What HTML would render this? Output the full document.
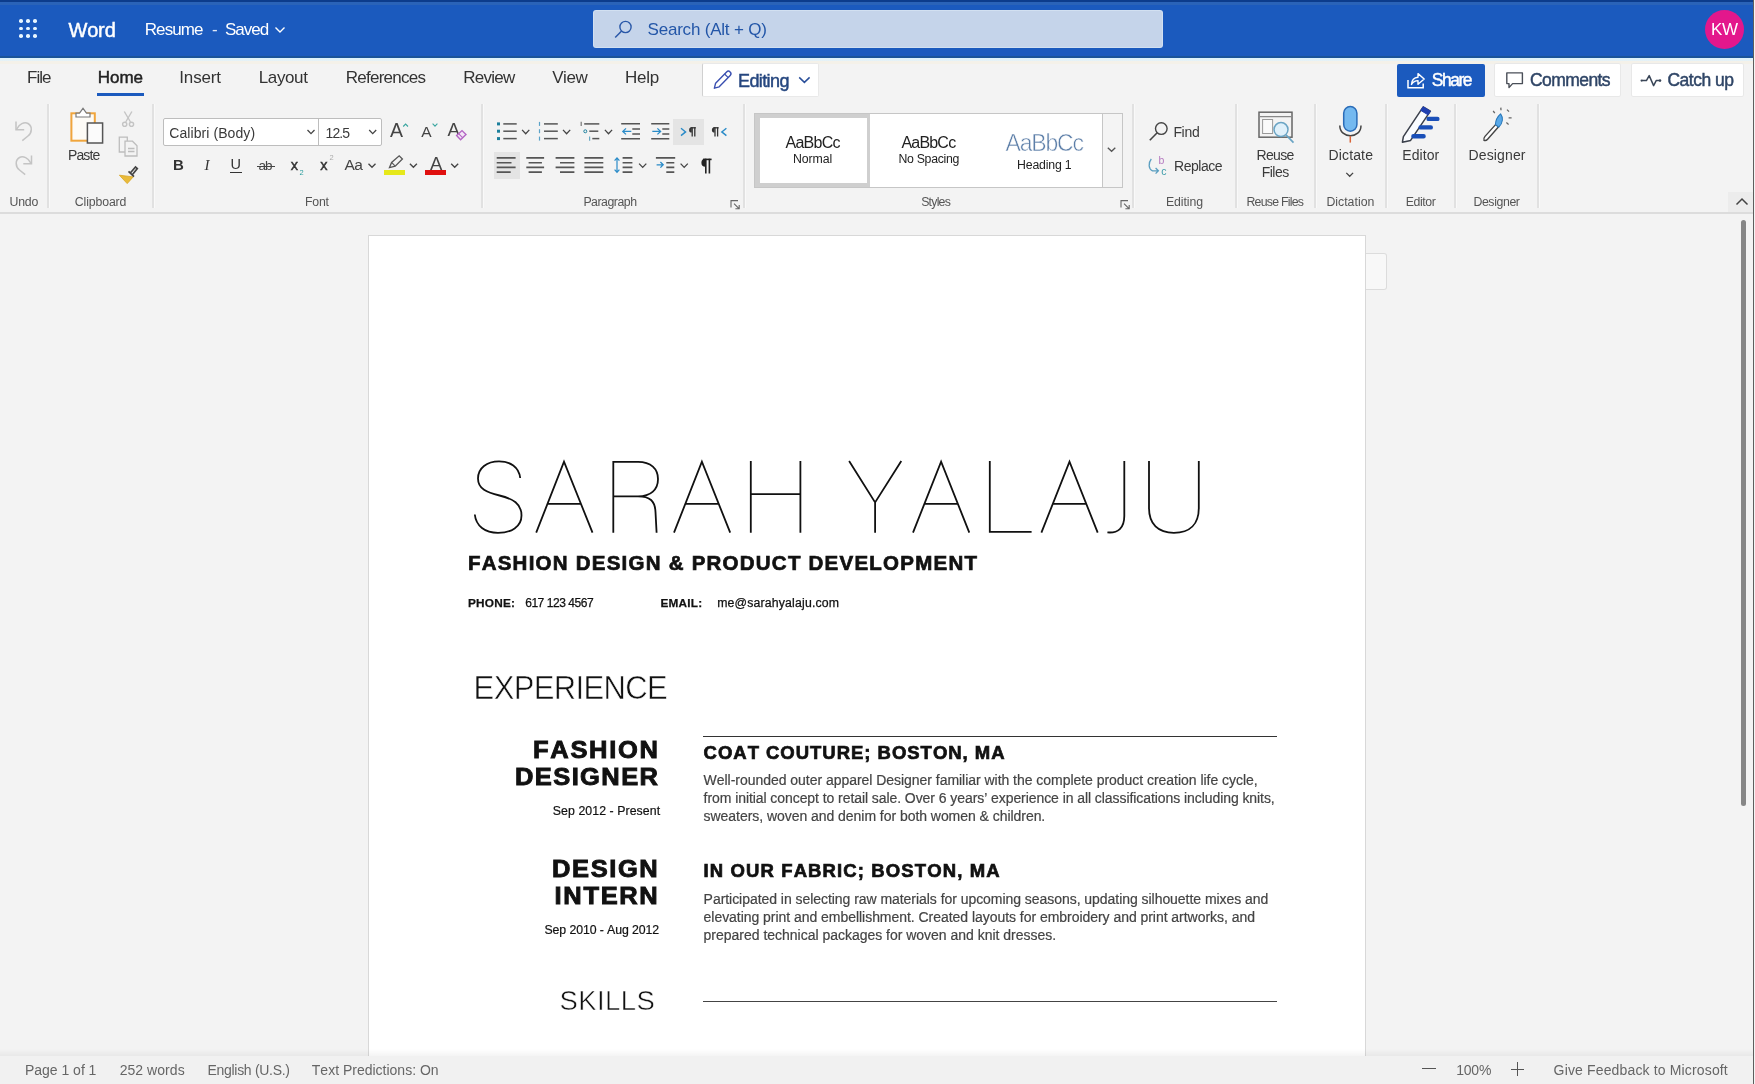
<!DOCTYPE html>
<html><head><meta charset="utf-8"><title>Resume - Word</title>
<style>
html,body{margin:0;padding:0}
html{overflow:hidden;background:#f3f3f3}
body{width:1755px;height:1084px;overflow:hidden;position:relative;background:#f3f3f3;
 font-family:"Liberation Sans",sans-serif;font-kerning:none;font-variant-ligatures:none;
 -webkit-font-smoothing:antialiased}
.t{position:absolute;white-space:pre;display:block}
.b{position:absolute;box-sizing:border-box}
svg{position:absolute;overflow:visible}
.sep{position:absolute;top:104px;height:104px;width:2.2px;background:#e1e1e1;border-right:1.3px solid #f9f9f9}
#w{position:absolute;left:0;top:0;width:1755px;height:1084px;will-change:transform;transform:translateZ(0)}
</style></head><body><div id="w">
<div class="b" style="left:0;top:0;width:1755px;height:58px;background:#1b5abe"></div>
<div class="b" style="left:0;top:0;width:1755px;height:2px;background:#0c3c8c"></div>
<div class="b" style="left:0;top:2px;width:1755px;height:3px;background:#2a63b8"></div>
<div class="b" style="left:0;top:56px;width:1755px;height:2px;background:#1a5499"></div>
<div class="b" style="left:0;top:58px;width:1755px;height:3.2px;background:linear-gradient(to bottom,#dcf3fd,#e6f1f6)"></div>
<div class="b" style="left:0;top:61.2px;width:1755px;height:2.6px;background:#f4f1e9"></div>
<div class="b" style="left:19.0px;top:19.4px;width:3.6px;height:3.6px;border-radius:50%;background:#e8f6ff"></div>
<div class="b" style="left:19.0px;top:26.6px;width:3.6px;height:3.6px;border-radius:50%;background:#e8f6ff"></div>
<div class="b" style="left:19.0px;top:34.0px;width:3.6px;height:3.6px;border-radius:50%;background:#e8f6ff"></div>
<div class="b" style="left:26.2px;top:19.4px;width:3.6px;height:3.6px;border-radius:50%;background:#e8f6ff"></div>
<div class="b" style="left:26.2px;top:26.6px;width:3.6px;height:3.6px;border-radius:50%;background:#e8f6ff"></div>
<div class="b" style="left:26.2px;top:34.0px;width:3.6px;height:3.6px;border-radius:50%;background:#e8f6ff"></div>
<div class="b" style="left:33.4px;top:19.4px;width:3.6px;height:3.6px;border-radius:50%;background:#e8f6ff"></div>
<div class="b" style="left:33.4px;top:26.6px;width:3.6px;height:3.6px;border-radius:50%;background:#e8f6ff"></div>
<div class="b" style="left:33.4px;top:34.0px;width:3.6px;height:3.6px;border-radius:50%;background:#e8f6ff"></div>
<span class="t" style="left:68.40px;top:16.57px;font-size:20.00px;line-height:26px;letter-spacing:-0.133px;font-weight:400;font-style:normal;color:#fff;-webkit-text-stroke:0.7px #fff;-webkit-text-stroke:0.45px #fff;">Word</span>
<span class="t" style="left:144.70px;top:19.21px;font-size:17.00px;line-height:22px;letter-spacing:-0.888px;font-weight:400;font-style:normal;color:#fff;">Resume</span>
<span class="t" style="left:212.00px;top:19.21px;font-size:17.00px;line-height:22px;letter-spacing:0.000px;font-weight:400;font-style:normal;color:#dfe8f7;">-</span>
<span class="t" style="left:225.00px;top:19.21px;font-size:17.00px;line-height:22px;letter-spacing:-1.028px;font-weight:400;font-style:normal;color:#fff;">Saved</span>
<svg style="left:274px;top:25px" width="12" height="10" viewBox="0 0 12 10"><path d="M1.5 2.5 L6 7 L10.5 2.5" fill="none" stroke="#fff" stroke-width="1.4"/></svg>
<div class="b" style="left:592.6px;top:9.5px;width:570.4px;height:38.8px;border-radius:3px;background:#c5d4ea;border:1px solid rgba(235,245,255,0.35)"></div>
<svg style="left:613px;top:19px" width="22" height="22" viewBox="0 0 22 22"><circle cx="12.5" cy="8" r="5.6" fill="none" stroke="#2a58a8" stroke-width="1.4"/><path d="M8.6 12 L2.2 18.6" stroke="#2a58a8" stroke-width="1.5" fill="none"/></svg>
<span class="t" style="left:647.50px;top:19.31px;font-size:17.00px;line-height:22px;letter-spacing:-0.199px;font-weight:400;font-style:normal;color:#2356a8;">Search (Alt + Q)</span>
<div class="b" style="left:1704.5px;top:9.5px;width:39px;height:39px;border-radius:50%;background:#e3178c"></div>
<span class="t" style="left:1711.00px;top:19.01px;font-size:17.00px;line-height:22px;letter-spacing:-0.370px;font-weight:400;font-style:normal;color:#fff;">KW</span>
<span class="t" style="left:27.10px;top:66.71px;font-size:17.00px;line-height:22px;letter-spacing:-0.995px;font-weight:400;font-style:normal;color:#333;">File</span>
<span class="t" style="left:97.80px;top:66.71px;font-size:17.00px;line-height:22px;letter-spacing:-0.068px;font-weight:400;font-style:normal;color:#222;-webkit-text-stroke:0.65px #222;-webkit-text-stroke:0.45px #222;">Home</span>
<div class="b" style="left:97px;top:92.5px;width:46.5px;height:3px;background:#1b5abe"></div>
<span class="t" style="left:179.30px;top:66.71px;font-size:17.00px;line-height:22px;letter-spacing:-0.157px;font-weight:400;font-style:normal;color:#333;">Insert</span>
<span class="t" style="left:258.70px;top:66.71px;font-size:17.00px;line-height:22px;letter-spacing:-0.360px;font-weight:400;font-style:normal;color:#333;">Layout</span>
<span class="t" style="left:345.70px;top:66.71px;font-size:17.00px;line-height:22px;letter-spacing:-0.730px;font-weight:400;font-style:normal;color:#333;">References</span>
<span class="t" style="left:463.30px;top:66.71px;font-size:17.00px;line-height:22px;letter-spacing:-0.755px;font-weight:400;font-style:normal;color:#333;">Review</span>
<span class="t" style="left:552.20px;top:66.71px;font-size:17.00px;line-height:22px;letter-spacing:-0.402px;font-weight:400;font-style:normal;color:#333;">View</span>
<span class="t" style="left:624.90px;top:66.71px;font-size:17.00px;line-height:22px;letter-spacing:-0.217px;font-weight:400;font-style:normal;color:#333;">Help</span>
<div class="b" style="left:702.3px;top:62.8px;width:116.5px;height:34px;background:#fff;border:1px solid #e9e9e9;border-left-color:#d0d0d0;border-radius:2px"></div>
<span class="t" style="left:738.00px;top:69.66px;font-size:18.00px;line-height:23px;letter-spacing:-0.600px;font-weight:400;font-style:normal;color:#25467f;-webkit-text-stroke:0.6px #25467f;-webkit-text-stroke:0.45px #25467f;">Editing</span>
<svg style="left:797.6px;top:75.4px" width="13" height="10" viewBox="0 0 13 10"><path d="M1.2 2.4 L6.4 7.4 L11.6 2.4" fill="none" stroke="#2a4f9a" stroke-width="1.5"/></svg>
<div class="b" style="left:1396.5px;top:63.5px;width:88px;height:33px;background:#1b5abe;border-radius:2px"></div>
<span class="t" style="left:1431.80px;top:69.14px;font-size:17.50px;line-height:23px;letter-spacing:-1.484px;font-weight:400;font-style:normal;color:#fff;-webkit-text-stroke:0.6px #fff;-webkit-text-stroke:0.45px #fff;">Share</span>
<div class="b" style="left:1493.8px;top:62.6px;width:127.2px;height:34.8px;background:#fff;border:1px solid #e8e8e8;border-radius:2px"></div>
<span class="t" style="left:1530.00px;top:69.14px;font-size:17.50px;line-height:23px;letter-spacing:-0.573px;font-weight:400;font-style:normal;color:#2f4566;-webkit-text-stroke:0.6px #2f4566;-webkit-text-stroke:0.45px #2f4566;">Comments</span>
<div class="b" style="left:1631.2px;top:62.6px;width:113.2px;height:34.8px;background:#fff;border:1px solid #e8e8e8;border-radius:2px"></div>
<span class="t" style="left:1667.50px;top:69.14px;font-size:17.50px;line-height:23px;letter-spacing:-0.514px;font-weight:400;font-style:normal;color:#2f4566;-webkit-text-stroke:0.6px #2f4566;-webkit-text-stroke:0.45px #2f4566;">Catch up</span>
<div class="b" style="left:0;top:212px;width:1755px;height:2px;background:#dcdcdc"></div>
<div class="sep" style="left:47.2px"></div>
<div class="sep" style="left:151.8px"></div>
<div class="sep" style="left:481.2px"></div>
<div class="sep" style="left:743.2px"></div>
<div class="sep" style="left:1132.3px"></div>
<div class="sep" style="left:1235.2px"></div>
<div class="sep" style="left:1313.7px"></div>
<div class="sep" style="left:1384.8px"></div>
<div class="sep" style="left:1454.2px"></div>
<div class="sep" style="left:1537.2px"></div>
<span class="t" style="left:9.50px;top:194.44px;font-size:12.30px;line-height:16px;letter-spacing:-0.212px;font-weight:400;font-style:normal;color:#555;">Undo</span>
<span class="t" style="left:74.80px;top:194.44px;font-size:12.30px;line-height:16px;letter-spacing:-0.128px;font-weight:400;font-style:normal;color:#555;">Clipboard</span>
<span class="t" style="left:305.00px;top:194.44px;font-size:12.30px;line-height:16px;letter-spacing:-0.200px;font-weight:400;font-style:normal;color:#555;">Font</span>
<span class="t" style="left:583.40px;top:194.44px;font-size:12.30px;line-height:16px;letter-spacing:-0.472px;font-weight:400;font-style:normal;color:#555;">Paragraph</span>
<span class="t" style="left:921.20px;top:194.44px;font-size:12.30px;line-height:16px;letter-spacing:-0.771px;font-weight:400;font-style:normal;color:#555;">Styles</span>
<span class="t" style="left:1166.00px;top:194.44px;font-size:12.30px;line-height:16px;letter-spacing:-0.086px;font-weight:400;font-style:normal;color:#555;">Editing</span>
<span class="t" style="left:1246.40px;top:194.44px;font-size:12.30px;line-height:16px;letter-spacing:-0.732px;font-weight:400;font-style:normal;color:#555;">Reuse Files</span>
<span class="t" style="left:1326.40px;top:194.44px;font-size:12.30px;line-height:16px;letter-spacing:0.014px;font-weight:400;font-style:normal;color:#555;">Dictation</span>
<span class="t" style="left:1405.70px;top:194.44px;font-size:12.30px;line-height:16px;letter-spacing:-0.401px;font-weight:400;font-style:normal;color:#555;">Editor</span>
<span class="t" style="left:1473.40px;top:194.44px;font-size:12.30px;line-height:16px;letter-spacing:-0.377px;font-weight:400;font-style:normal;color:#555;">Designer</span>
<span class="t" style="left:67.90px;top:146.05px;font-size:14.00px;line-height:18px;letter-spacing:-0.843px;font-weight:400;font-style:normal;color:#3a3a3a;">Paste</span>
<div class="b" style="left:163px;top:117.5px;width:218.5px;height:28.5px;background:#fff;border:1px solid #bdbdbd;border-radius:2px"></div>
<div class="b" style="left:318px;top:118px;width:1px;height:27.5px;background:#bdbdbd"></div>
<span class="t" style="left:169.20px;top:124.05px;font-size:14.00px;line-height:18px;letter-spacing:0.085px;font-weight:400;font-style:normal;color:#3a3a3a;">Calibri (Body)</span>
<span class="t" style="left:325.50px;top:124.05px;font-size:14.00px;line-height:18px;letter-spacing:-0.910px;font-weight:400;font-style:normal;color:#3a3a3a;">12.5</span>
<span class="t" style="left:173.00px;top:154.90px;font-size:15.00px;line-height:20px;letter-spacing:0.000px;font-weight:700;font-style:normal;color:#333;">B</span>
<span class="t" style="left:204.50px;top:154.90px;font-size:15.00px;line-height:20px;letter-spacing:0.000px;font-weight:400;font-style:italic;color:#333;font-family:'Liberation Serif',serif;">I</span>
<span class="t" style="left:230.50px;top:154.98px;font-size:14.50px;line-height:19px;letter-spacing:0.000px;font-weight:400;font-style:normal;color:#333;">U</span>
<div class="b" style="left:229.5px;top:171.5px;width:12px;height:1.3px;background:#333"></div>
<span class="t" style="left:258.50px;top:156.82px;font-size:13.50px;line-height:18px;letter-spacing:-0.985px;font-weight:400;font-style:normal;color:#444;">ab</span>
<div class="b" style="left:256.5px;top:165.6px;width:18.5px;height:1.2px;background:#444"></div>
<span class="t" style="left:290.80px;top:156.18px;font-size:14.50px;line-height:19px;letter-spacing:0.000px;font-weight:400;font-style:normal;color:#333;-webkit-text-stroke:0.45px #333;">x</span>
<span class="t" style="left:299.60px;top:167.50px;font-size:7.50px;line-height:10px;letter-spacing:0.000px;font-weight:400;font-style:normal;color:#2a9d9d;">2</span>
<span class="t" style="left:320.30px;top:156.18px;font-size:14.50px;line-height:19px;letter-spacing:0.000px;font-weight:400;font-style:normal;color:#333;-webkit-text-stroke:0.45px #333;">x</span>
<span class="t" style="left:329.40px;top:153.40px;font-size:7.50px;line-height:10px;letter-spacing:0.000px;font-weight:400;font-style:normal;color:#aaa;">2</span>
<span class="t" style="left:344.60px;top:155.33px;font-size:15.50px;line-height:20px;letter-spacing:-0.588px;font-weight:400;font-style:normal;color:#444;">Aa</span>
<span class="t" style="left:390.00px;top:118.04px;font-size:19.50px;line-height:25px;letter-spacing:0.000px;font-weight:400;font-style:normal;color:#444;">A</span>
<span class="t" style="left:421.20px;top:121.93px;font-size:15.50px;line-height:20px;letter-spacing:0.000px;font-weight:400;font-style:normal;color:#444;">A</span>
<span class="t" style="left:447.50px;top:118.09px;font-size:18.50px;line-height:24px;letter-spacing:0.000px;font-weight:400;font-style:normal;color:#444;">A</span>
<span class="t" style="left:430.00px;top:151.69px;font-size:18.50px;line-height:24px;letter-spacing:0.000px;font-weight:400;font-style:normal;color:#444;">A</span>
<div class="b" style="left:425.4px;top:170.2px;width:20.3px;height:5.2px;background:#e0100f"></div>
<div class="b" style="left:384px;top:170.2px;width:21px;height:5.2px;background:#e6e81a"></div>
<div class="b" style="left:673px;top:118.5px;width:30.5px;height:26.5px;background:#e4e4e4"></div>
<div class="b" style="left:493.5px;top:152px;width:26.5px;height:27px;background:#e4e4e4"></div>
<div class="b" style="left:754px;top:112.5px;width:369px;height:75px;background:#fff;border:1px solid #c6c6c6"></div>
<div class="b" style="left:755px;top:113.5px;width:114.5px;height:73px;background:#fff;border:4px solid #cfcfcf;border-left-width:5px;border-right-width:3px"></div>
<div class="b" style="left:1102px;top:113.5px;width:20px;height:73px;background:#f4f4f4;border-left:1px solid #c6c6c6"></div>
<span class="t" style="left:785.60px;top:131.86px;font-size:16.00px;line-height:21px;letter-spacing:-0.772px;font-weight:400;font-style:normal;color:#222;">AaBbCc</span>
<span class="t" style="left:792.90px;top:150.94px;font-size:12.30px;line-height:16px;letter-spacing:-0.041px;font-weight:400;font-style:normal;color:#222;">Normal</span>
<span class="t" style="left:901.40px;top:131.86px;font-size:16.00px;line-height:21px;letter-spacing:-0.792px;font-weight:400;font-style:normal;color:#222;">AaBbCc</span>
<span class="t" style="left:898.40px;top:150.94px;font-size:12.30px;line-height:16px;letter-spacing:-0.285px;font-weight:400;font-style:normal;color:#222;">No Spacing</span>
<span class="t" style="left:1005.50px;top:127.63px;font-size:23.00px;line-height:30px;letter-spacing:-1.196px;font-weight:400;font-style:normal;color:#5c7ea8;-webkit-text-stroke:0.55px #fff;">AaBbCc</span>
<span class="t" style="left:1017.00px;top:156.64px;font-size:12.30px;line-height:16px;letter-spacing:-0.171px;font-weight:400;font-style:normal;color:#222;">Heading 1</span>
<span class="t" style="left:1173.40px;top:122.55px;font-size:14.00px;line-height:18px;letter-spacing:-0.320px;font-weight:400;font-style:normal;color:#3a3a3a;">Find</span>
<span class="t" style="left:1174.00px;top:156.75px;font-size:14.00px;line-height:18px;letter-spacing:-0.473px;font-weight:400;font-style:normal;color:#3a3a3a;">Replace</span>
<span class="t" style="left:1256.60px;top:146.05px;font-size:14.00px;line-height:18px;letter-spacing:-0.697px;font-weight:400;font-style:normal;color:#3a3a3a;">Reuse</span>
<span class="t" style="left:1261.80px;top:163.05px;font-size:14.00px;line-height:18px;letter-spacing:-0.543px;font-weight:400;font-style:normal;color:#3a3a3a;">Files</span>
<span class="t" style="left:1328.50px;top:146.05px;font-size:14.00px;line-height:18px;letter-spacing:0.143px;font-weight:400;font-style:normal;color:#3a3a3a;">Dictate</span>
<span class="t" style="left:1402.30px;top:146.05px;font-size:14.00px;line-height:18px;letter-spacing:0.072px;font-weight:400;font-style:normal;color:#3a3a3a;">Editor</span>
<span class="t" style="left:1468.60px;top:146.05px;font-size:14.00px;line-height:18px;letter-spacing:0.124px;font-weight:400;font-style:normal;color:#3a3a3a;">Designer</span>
<div class="b" style="left:1728px;top:192px;width:25px;height:20px;background:#ececec"></div>
<svg style="left:1735px;top:197px" width="14" height="10" viewBox="0 0 14 10"><path d="M1.5 7.5 L7 2 L12.5 7.5" fill="none" stroke="#444" stroke-width="1.5"/></svg>
<div class="b" style="left:368.2px;top:235.2px;width:997.8px;height:830px;background:#fff;border:1.3px solid #d8d8d8"></div>
<div class="b" style="left:1366px;top:253px;width:21px;height:37px;background:#f8f8f8;border:1px solid #dcdcdc;border-left:none;border-radius:0 3px 3px 0"></div>
<div class="b" style="left:1740.6px;top:219.5px;width:5.7px;height:586.5px;background:#868686;border-radius:3px"></div>
<div class="b" style="left:1752.8px;top:0;width:1.3px;height:1084px;background:#5e5e5e"></div>
<div class="b" style="left:1754px;top:0;width:1px;height:1084px;background:#f4f4f4"></div>
<div class="b" style="left:0;top:1055.5px;width:1752.8px;height:28.5px;background:#f1f1f1"></div>
<div class="b" style="left:0;top:1049px;width:1752.8px;height:6.5px;background:linear-gradient(to bottom,rgba(0,0,0,0),rgba(0,0,0,0.045))"></div>
<span class="t" style="left:25.00px;top:1061.25px;font-size:14.00px;line-height:18px;letter-spacing:-0.021px;font-weight:400;font-style:normal;color:#666;">Page 1 of 1</span>
<span class="t" style="left:119.70px;top:1061.25px;font-size:14.00px;line-height:18px;letter-spacing:0.045px;font-weight:400;font-style:normal;color:#666;">252 words</span>
<span class="t" style="left:207.50px;top:1061.25px;font-size:14.00px;line-height:18px;letter-spacing:-0.301px;font-weight:400;font-style:normal;color:#666;">English (U.S.)</span>
<span class="t" style="left:311.80px;top:1061.25px;font-size:14.00px;line-height:18px;letter-spacing:-0.002px;font-weight:400;font-style:normal;color:#666;">Text Predictions: On</span>
<span class="t" style="left:1456.30px;top:1061.25px;font-size:14.00px;line-height:18px;letter-spacing:-0.257px;font-weight:400;font-style:normal;color:#666;">100%</span>
<span class="t" style="left:1553.60px;top:1061.25px;font-size:14.00px;line-height:18px;letter-spacing:0.150px;font-weight:400;font-style:normal;color:#666;">Give Feedback to Microsoft</span>
<div class="b" style="left:1422.4px;top:1068px;width:13.7px;height:1.3px;background:#555"></div>
<div class="b" style="left:1510.5px;top:1068.6px;width:13.8px;height:1.3px;background:#555"></div>
<div class="b" style="left:1516.8px;top:1062.3px;width:1.3px;height:13.8px;background:#555"></div>
<svg style="left:0;top:0" width="1755" height="1084" viewBox="0 0 1755 1084">
<g fill="none" stroke="#c4c4c4" stroke-width="1.5"><path d="M16 121.5 V129.7 H24.2"/><path d="M16.4 129.3 C19 124 24.5 121.5 28 123.5 C32.5 126 32.3 132.5 28 136 L22.3 140.7"/><path d="M31.5 155.5 V163.7 H23.3"/><path d="M31.1 163.3 C28.5 158 23 155.5 19.5 157.5 C15 160 15.2 166.5 19.5 170 L25.2 174.7"/></g>
<rect x="71.4" y="113.3" width="23.4" height="27.4" fill="#fdfbf6" stroke="#f0a53c" stroke-width="2"/>
<path d="M76 117 V113.2 H79.5 L83 108.3 L86.5 113.2 H90 V117 Z" fill="#fff" stroke="#7a7a7a" stroke-width="1.2"/>
<rect x="87.4" y="123" width="15.2" height="20" fill="#fbfbfb" stroke="#555" stroke-width="1.5"/>
<g fill="none" stroke="#c4c4c4" stroke-width="1.4"><path d="M124.3 111.5 L130.5 122"/><path d="M131.9 111.5 L125.7 122"/><circle cx="124.7" cy="124.3" r="2.1"/><circle cx="131.5" cy="124.3" r="2.1"/></g>
<g fill="none" stroke="#bdbdbd" stroke-width="1.3"><path d="M125 152 H119.3 V137.2 H127.3 V141"/><path d="M125 141.2 H132.5 L137 145.7 V156 H125 Z"/><path d="M128 148.5 H134.5 M128 151.5 H134.5"/></g>
<path d="M119.4 175.2 L133.2 176.9 L127.2 183.6 Z" fill="#e9bb3a" stroke="#d9a520" stroke-width="0.8"/>
<path d="M128.5 171.3 L134 176.6 M130.3 173 L135.5 167 L137.3 168.6 L132.3 174.8" fill="none" stroke="#444" stroke-width="1.7"/>
<path d="M307.5 130.0 L311.0 133.6 L314.5 130.0" fill="none" stroke="#444" stroke-width="1.3"/>
<path d="M369.2 130.0 L372.7 133.6 L376.2 130.0" fill="none" stroke="#444" stroke-width="1.3"/>
<path d="M368.5 163.7 L372.0 167.3 L375.5 163.7" fill="none" stroke="#444" stroke-width="1.3"/>
<path d="M409.9 163.7 L413.4 167.3 L416.9 163.7" fill="none" stroke="#444" stroke-width="1.3"/>
<path d="M451.2 163.7 L454.7 167.3 L458.2 163.7" fill="none" stroke="#444" stroke-width="1.3"/>
<path d="M403.2 126.5 L405.6 124 L408 126.5" fill="none" stroke="#3aa6a0" stroke-width="1.1"/>
<path d="M432.6 123.6 L435 126.1 L437.4 123.6" fill="none" stroke="#3aa6a0" stroke-width="1.1"/>
<path d="M456.6 135.6 L462 130.6 L466 134.6 L460.6 139.8 Z" fill="#f3e6f6" stroke="#b365c4" stroke-width="1.4"/><path d="M458.6 133.6 L462.8 137.8" stroke="#b365c4" stroke-width="1.1"/>
<path d="M389.5 167.6 L391.6 162.5 L399.2 155.8 L402.4 159 L395.2 166.2 Z" fill="none" stroke="#555" stroke-width="1.3"/><path d="M391.8 162.6 L395 165.9" stroke="#555" stroke-width="1.1"/>
<rect x="497" y="122.4" width="3" height="3" fill="#1c7f9c"/>
<path d="M503.3 123.9 H516.7" stroke="#555" stroke-width="1.5"/>
<path d="M539.5 121.9 V125.9" stroke="#5aa2c8" stroke-width="1.2"/>
<path d="M544 123.9 H557.8" stroke="#555" stroke-width="1.5"/>
<rect x="497" y="129.7" width="3" height="3" fill="#1c7f9c"/>
<path d="M503.3 131.2 H516.7" stroke="#555" stroke-width="1.5"/>
<path d="M539.5 129.2 V133.2" stroke="#5aa2c8" stroke-width="1.2"/>
<path d="M544 131.2 H557.8" stroke="#555" stroke-width="1.5"/>
<rect x="497" y="137.1" width="3" height="3" fill="#1c7f9c"/>
<path d="M503.3 138.6 H516.7" stroke="#555" stroke-width="1.5"/>
<path d="M539.5 136.6 V140.6" stroke="#5aa2c8" stroke-width="1.2"/>
<path d="M544 138.6 H557.8" stroke="#555" stroke-width="1.5"/>
<path d="M522.1 129.9 L525.7 133.7 L529.3 129.9" fill="none" stroke="#444" stroke-width="1.3"/>
<path d="M563.0 129.9 L566.6 133.7 L570.2 129.9" fill="none" stroke="#444" stroke-width="1.3"/>
<path d="M604.9 129.9 L608.5 133.7 L612.1 129.9" fill="none" stroke="#444" stroke-width="1.3"/>
<path d="M581.2 121.8 V126" stroke="#777" stroke-width="1.2"/><path d="M584.2 123.9 H599.3" stroke="#555" stroke-width="1.5"/>
<circle cx="585.3" cy="131.3" r="1.5" fill="none" stroke="#1c7f9c" stroke-width="1"/><path d="M589.3 131.2 H598.3" stroke="#555" stroke-width="1.5"/>
<path d="M589.6 136.6 V140.8" stroke="#6aa9c4" stroke-width="1.2"/><path d="M592.3 138.6 H599.3" stroke="#555" stroke-width="1.5"/>
<g stroke="#555" stroke-width="1.5" fill="none"><path d="M621.2 123.8 H640 M621.2 138.8 H640 M632.3 128.9 H640 M632.3 133.9 H640"/></g>
<path d="M631.3 131.4 H623 M626 128.4 L622.8 131.4 L626 134.4" fill="none" stroke="#2a8bc8" stroke-width="1.3"/>
<g stroke="#555" stroke-width="1.5" fill="none"><path d="M651.2 123.8 H669.3 M651.2 138.8 H669.3 M662.3 128.9 H669.3 M662.3 133.9 H669.3"/></g>
<path d="M652.3 131.4 H660.4 M657.4 128.4 L660.6 131.4 L657.4 134.4" fill="none" stroke="#2a8bc8" stroke-width="1.3"/>
<path d="M681 128.2 L685.6 131.9 L681 135.6" fill="none" stroke="#2a8bc8" stroke-width="1.4"/>
<path d="M690.6 127.8 H695.8" stroke="#333" stroke-width="1.3" fill="none"/>
<path d="M691.8 127.2 a2.7 2.7 0 0 0 0 5.4 Z" fill="#333"/>
<path d="M692.2 127.2 V136.6 M694.8 127.2 V136.6" stroke="#333" stroke-width="1.3" fill="none"/>
<path d="M713.4 127.8 H718.6" stroke="#333" stroke-width="1.3" fill="none"/>
<path d="M714.6 127.2 a2.7 2.7 0 0 0 0 5.4 Z" fill="#333"/>
<path d="M715.0 127.2 V136.6 M717.6 127.2 V136.6" stroke="#333" stroke-width="1.3" fill="none"/>
<path d="M726.4 128.2 L721.8 131.9 L726.4 135.6" fill="none" stroke="#2a8bc8" stroke-width="1.4"/>
<path d="M496.7 157.9 H515.6 M496.7 162.7 H511.5 M496.7 167.4 H515.6 M496.7 172.1 H510.7" stroke="#555" stroke-width="1.6" fill="none"/>
<path d="M526.3 157.9 H544.1 M528.6 162.7 H541.9 M526.3 167.4 H544.1 M528.6 172.1 H541.9" stroke="#555" stroke-width="1.6" fill="none"/>
<path d="M555.6 157.9 H574.4 M560.0 162.7 H574.4 M555.6 167.4 H574.4 M560.0 172.1 H574.4" stroke="#555" stroke-width="1.6" fill="none"/>
<path d="M584.4 157.9 H603.3 M584.4 162.7 H603.3 M584.4 167.4 H603.3 M584.4 172.1 H603.3" stroke="#555" stroke-width="1.6" fill="none"/>
<path d="M622.6 157.9 H632.4 M622.6 162.7 H632.4 M622.6 167.4 H632.4 M622.6 172.1 H632.4" stroke="#555" stroke-width="1.6" fill="none"/>
<path d="M617 158 V172.4 M614.6 160.6 L617 157.8 L619.4 160.6 M614.6 169.6 L617 172.4 L619.4 169.6" fill="none" stroke="#2a8bc8" stroke-width="1.2"/>
<path d="M639.1 163.6 L642.7 167.4 L646.3 163.6" fill="none" stroke="#444" stroke-width="1.3"/>
<path d="M655.9 157.9 H675.2 M666.3 162.7 H674.3 M666.3 167.4 H674.3 M666.3 172.1 H674.3" stroke="#555" stroke-width="1.6" fill="none"/>
<path d="M656.6 164.8 H663 M660.4 162 L663.2 164.8 L660.4 167.6" fill="none" stroke="#2a8bc8" stroke-width="1.3"/>
<path d="M680.6 163.6 L684.2 167.4 L687.8 163.6" fill="none" stroke="#444" stroke-width="1.3"/>
<path d="M703 159.4 H711.6" stroke="#222" stroke-width="1.6"/><path d="M705.4 158.7 a4 4 0 0 0 0 8 Z" fill="#222"/><path d="M705.8 158.7 V173.4 M709.4 158.7 V173.4" stroke="#222" stroke-width="1.6"/>
<path d="M731.0 207.6 V200.6 H738.0" fill="none" stroke="#666" stroke-width="1.1"/>
<path d="M734.0 203.6 L739.0 208.6 M735.4 208.8 H739.2 V205.0" fill="none" stroke="#666" stroke-width="1.1"/>
<path d="M1121.0 207.6 V200.6 H1128.0" fill="none" stroke="#666" stroke-width="1.1"/>
<path d="M1124.0 203.6 L1129.0 208.6 M1125.4 208.8 H1129.2 V205.0" fill="none" stroke="#666" stroke-width="1.1"/>
<path d="M1107.8 147.7 L1111.6 151.3 L1115.3 147.7" fill="none" stroke="#555" stroke-width="1.3"/>
<circle cx="1161.3" cy="128.6" r="5.8" fill="none" stroke="#444" stroke-width="1.4"/><path d="M1157.2 132.8 L1149.8 140.2" stroke="#444" stroke-width="1.6"/>
<text x="1158.6" y="163.5" font-family="Liberation Sans" font-size="10.5" fill="#b57ac0">b</text>
<text x="1161.2" y="175.3" font-family="Liberation Sans" font-size="10.5" fill="#3a9aa8">c</text>
<path d="M1151.3 159 C1148 163 1148.5 169 1152.5 170.8 H1158.2 M1155.6 168 L1158.4 170.8 L1155.6 173.6" fill="none" stroke="#5a9ec0" stroke-width="1.3"/>
<rect x="1259" y="112.2" width="33" height="25" fill="none" stroke="#666" stroke-width="1.5"/><path d="M1259 116.6 H1292" stroke="#888" stroke-width="1.2"/><rect x="1262.6" y="119.5" width="10" height="14" fill="#fafafa" stroke="#999" stroke-width="1"/>
<circle cx="1281" cy="129.6" r="7" fill="#dff0fa" stroke="#6aa4c4" stroke-width="1.5"/><path d="M1286 134.8 L1293.5 142.6" stroke="#6aa4c4" stroke-width="1.7"/>
<rect x="1343.7" y="106.6" width="13.2" height="24.6" rx="6.6" fill="#74b9f0" stroke="#2a6cb8" stroke-width="1.5"/>
<path d="M1339.8 125.4 C1339.8 139.2 1361 139.2 1361 125.4" fill="none" stroke="#444" stroke-width="1.5"/><path d="M1350.3 136 V142.6" stroke="#d9663a" stroke-width="1.5"/>
<path d="M1346.3 172.9 L1349.7 176.3 L1353.1 172.9" fill="none" stroke="#444" stroke-width="1.3"/>
<path d="M1402.4 142.2 L1403.4 136.6 L1423.2 106.8 L1430.4 111.2 L1410.6 140.4 Z" fill="#fafcff" stroke="#3a3f4a" stroke-width="1.5" stroke-linejoin="round"/>
<path d="M1423.2 106.8 L1430.4 111.2 L1428 114.8 L1420.8 110.4 Z" fill="#1f3fb0" stroke="#1f3fb0" stroke-width="1"/>
<path d="M1428.6 118.9 H1437.4 M1420.6 127.4 H1430.8 M1413.4 136.3 H1423.6" stroke="#1a4fb8" stroke-width="4.4" stroke-linecap="round"/>
<path d="M1484 140.4 C1483.4 139 1484 137.6 1485 136.4 L1495.8 124.4 L1498.6 126.8 L1487.6 139.2 C1486.6 140.4 1485.2 140.8 1484 140.4 Z" fill="#fdfdfd" stroke="#444" stroke-width="1.4" stroke-linejoin="round"/>
<path d="M1495.4 124.6 C1495.6 119.6 1497.6 116.4 1500.6 113.8 C1503.4 117.6 1503 122.8 1498.8 127.2 Z" fill="#58a8e8" stroke="#2a78b8" stroke-width="1.1" stroke-linejoin="round"/>
<path d="M1493.2 111 L1494.8 113.2 M1500.8 107.6 L1501 110.2 M1507 109.6 L1509 111.6 M1508.6 117.8 L1511.6 117.8 M1506.4 122.6 L1508.6 124.4" stroke="#666" stroke-width="1.3"/>
<path d="M714.4 88.2 L715.6 83.2 L726.6 72 A2.3 2.3 0 0 1 730.2 75.4 L719.2 86.8 Z" fill="none" stroke="#3a4fb0" stroke-width="1.4" stroke-linejoin="round"/><path d="M724.6 74 L728.2 77.6" stroke="#3a4fb0" stroke-width="1.2"/>
<path d="M1408 80 V87.8 H1423.2 V83.5" fill="none" stroke="#fff" stroke-width="1.5"/>
<path d="M1411.5 84.5 C1411.8 79.5 1414.5 77.4 1418 77.2 V73.6 L1424.2 79 L1418 84.2 V80.6 C1415 80.6 1413 81.8 1411.5 84.5 Z" fill="none" stroke="#fff" stroke-width="1.4" stroke-linejoin="round"/>
<path d="M1506.8 72.9 H1522.4 V83.6 H1512.6 L1509 87.6 V83.6 H1506.8 Z" fill="none" stroke="#4a4f58" stroke-width="1.4" stroke-linejoin="round"/>
<path d="M1642 80.6 H1646.4 L1649.2 75.6 L1653.6 85.6 L1656.2 80.6 H1659" fill="none" stroke="#3a4658" stroke-width="1.5" stroke-linejoin="round"/><circle cx="1660" cy="80.6" r="1.3" fill="#3a4658"/><circle cx="1641.6" cy="80.6" r="1.1" fill="#3a4658"/>
</svg>
<svg style="left:0;top:0" width="1755" height="1084" viewBox="0 0 1755 1084"><g fill="none" stroke="#111" stroke-width="1.8" stroke-linejoin="miter" stroke-miterlimit="10">
<path d="M520.2 478 C519 467 510 461.3 499 461.3 C487 461.3 478 468 478 478.5 C478 489 487 492.5 499.5 495.5 C513 498.8 521.5 503.5 521.5 515.5 C521.5 527 511 532.8 498 532.8 C485 532.8 476 526 474.8 514.5"/>
<path d="M536.2 532.7 L564 461.6 L592.5 532.7 M547 503.9 H581"/>
<path d="M613.3 532.7 V461.8 H638 C651 461.8 658 469 658 479 C658 489.5 651 496.3 638 496.3 H613.3 M638 496.3 C650 496.3 655 501 655.5 512 L656.6 532.7"/>
<path d="M674 532.7 L701.9 461.6 L730.2 532.7 M685 503.9 H719"/>
<path d="M750.8 461 V532.7 M800.4 461 V532.7 M750.8 494.1 H800.4"/>
<path d="M849.1 461 L875.1 502.4 L901.3 461 M875.1 502.4 V532.7"/>
<path d="M913 532.7 L941.1 461.6 L969.3 532.7 M924 503.9 H958"/>
<path d="M989.8 461 V531.9 H1031.6"/>
<path d="M1041.4 532.7 L1069.5 461.6 L1097.7 532.7 M1052.5 503.9 H1086.5"/>
<path d="M1124.3 461 V516 C1124.3 528 1118 533.4 1107.4 532.4"/>
<path d="M1149 461 V508 C1149 524 1158 532.8 1173.9 532.8 C1190 532.8 1198.8 524 1198.8 508 V461"/>
</g></svg>
<span class="t" style="left:467.90px;top:549.10px;font-size:20.50px;line-height:27px;letter-spacing:1.236px;font-weight:700;font-style:normal;color:#111;-webkit-text-stroke:0.7px #111;transform:scaleY(1.0210);transform-origin:0 20.60px;">FASHION DESIGN &amp; PRODUCT DEVELOPMENT</span>
<span class="t" style="left:467.90px;top:596.01px;font-size:11.80px;line-height:15px;letter-spacing:0.251px;font-weight:700;font-style:normal;color:#111;-webkit-text-stroke:0.25px #111;">PHONE:</span>
<span class="t" style="left:525.20px;top:595.44px;font-size:12.00px;line-height:16px;letter-spacing:-0.456px;font-weight:400;font-style:normal;color:#111;-webkit-text-stroke:0.25px #111;">617 123 4567</span>
<span class="t" style="left:660.50px;top:596.01px;font-size:11.80px;line-height:15px;letter-spacing:0.190px;font-weight:700;font-style:normal;color:#111;-webkit-text-stroke:0.25px #111;">EMAIL:</span>
<span class="t" style="left:717.20px;top:595.34px;font-size:12.30px;line-height:16px;letter-spacing:0.161px;font-weight:400;font-style:normal;color:#111;-webkit-text-stroke:0.25px #111;">me@sarahyalaju.com</span>
<span class="t" style="left:473.60px;top:668.56px;font-size:31.00px;line-height:40px;letter-spacing:-0.637px;font-weight:400;font-style:normal;color:#111;-webkit-text-stroke:0.55px #fff;transform:scaleY(1.0596);transform-origin:0 30.74px;">EXPERIENCE</span>
<span class="t" style="left:559.60px;top:983.47px;font-size:27.50px;line-height:36px;letter-spacing:0.382px;font-weight:400;font-style:normal;color:#111;-webkit-text-stroke:0.55px #fff;transform:scaleY(0.9937);transform-origin:0 27.53px;">SKILLS</span>
<span class="t" style="left:533.00px;top:733.36px;font-size:25.50px;line-height:33px;letter-spacing:1.696px;font-weight:700;font-style:normal;color:#111;-webkit-text-stroke:0.95px #111;transform:scaleY(0.9690);transform-origin:0 25.34px;">FASHION</span>
<span class="t" style="left:515.00px;top:759.76px;font-size:25.50px;line-height:33px;letter-spacing:1.402px;font-weight:700;font-style:normal;color:#111;-webkit-text-stroke:0.95px #111;transform:scaleY(0.9690);transform-origin:0 25.34px;">DESIGNER</span>
<span class="t" style="left:552.10px;top:851.96px;font-size:25.50px;line-height:33px;letter-spacing:1.567px;font-weight:700;font-style:normal;color:#111;-webkit-text-stroke:0.95px #111;transform:scaleY(0.9462);transform-origin:0 25.34px;">DESIGN</span>
<span class="t" style="left:554.60px;top:878.76px;font-size:25.50px;line-height:33px;letter-spacing:1.653px;font-weight:700;font-style:normal;color:#111;-webkit-text-stroke:0.95px #111;transform:scaleY(0.9519);transform-origin:0 25.34px;">INTERN</span>
<span class="t" style="left:552.80px;top:802.94px;font-size:12.30px;line-height:16px;letter-spacing:0.079px;font-weight:400;font-style:normal;color:#111;-webkit-text-stroke:0.2px #111;">Sep 2012 - Present</span>
<span class="t" style="left:544.50px;top:921.74px;font-size:12.30px;line-height:16px;letter-spacing:-0.087px;font-weight:400;font-style:normal;color:#111;-webkit-text-stroke:0.2px #111;">Sep 2010 - Aug 2012</span>
<div class="b" style="left:703.2px;top:736px;width:574px;height:1.2px;background:#333"></div>
<div class="b" style="left:703.2px;top:1001px;width:574px;height:1.3px;background:#444"></div>
<span class="t" style="left:703.60px;top:740.59px;font-size:18.50px;line-height:24px;letter-spacing:0.977px;font-weight:700;font-style:normal;color:#111;-webkit-text-stroke:0.7px #111;transform:scaleY(1.0057);transform-origin:0 18.41px;">COAT COUTURE; BOSTON, MA</span>
<span class="t" style="left:703.50px;top:859.19px;font-size:18.50px;line-height:24px;letter-spacing:1.118px;font-weight:700;font-style:normal;color:#111;-webkit-text-stroke:0.7px #111;transform:scaleY(0.9899);transform-origin:0 18.41px;">IN OUR FABRIC; BOSTON, MA</span>
<span class="t" style="left:703.60px;top:770.75px;font-size:14.00px;line-height:18px;letter-spacing:-0.035px;font-weight:400;font-style:normal;color:#444;-webkit-text-stroke:0.2px #444;">Well-rounded outer apparel Designer familiar with the complete product creation life cycle,</span>
<span class="t" style="left:703.60px;top:788.95px;font-size:14.00px;line-height:18px;letter-spacing:-0.070px;font-weight:400;font-style:normal;color:#444;-webkit-text-stroke:0.2px #444;">from initial concept to retail sale. Over 6 years’ experience in all classifications including knits,</span>
<span class="t" style="left:703.60px;top:807.15px;font-size:14.00px;line-height:18px;letter-spacing:-0.045px;font-weight:400;font-style:normal;color:#444;-webkit-text-stroke:0.2px #444;">sweaters, woven and denim for both women &amp; children.</span>
<span class="t" style="left:703.60px;top:890.25px;font-size:14.00px;line-height:18px;letter-spacing:-0.046px;font-weight:400;font-style:normal;color:#444;-webkit-text-stroke:0.2px #444;">Participated in selecting raw materials for upcoming seasons, updating silhouette mixes and</span>
<span class="t" style="left:703.60px;top:908.05px;font-size:14.00px;line-height:18px;letter-spacing:-0.040px;font-weight:400;font-style:normal;color:#444;-webkit-text-stroke:0.2px #444;">elevating print and embellishment. Created layouts for embroidery and print artworks, and</span>
<span class="t" style="left:703.60px;top:925.95px;font-size:14.00px;line-height:18px;letter-spacing:-0.015px;font-weight:400;font-style:normal;color:#444;-webkit-text-stroke:0.2px #444;">prepared technical packages for woven and knit dresses.</span>
</div></body></html>
